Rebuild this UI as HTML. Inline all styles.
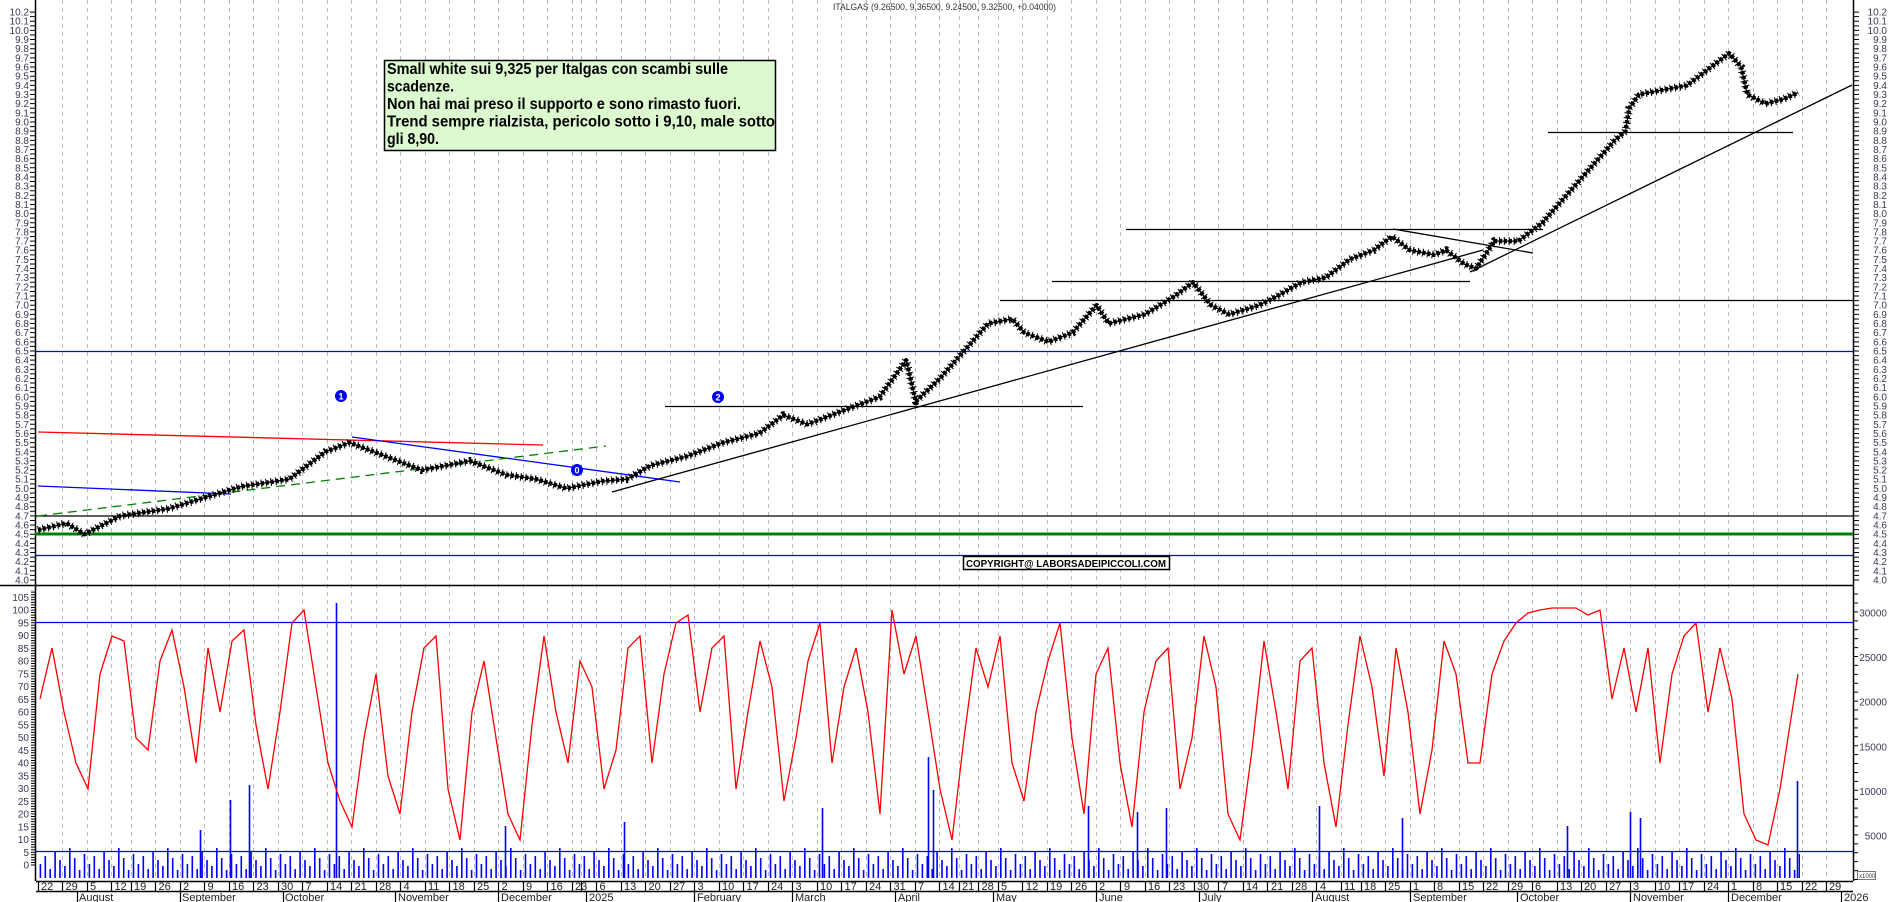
<!DOCTYPE html>
<html><head><meta charset="utf-8"><style>
html,body{margin:0;padding:0;background:#fff;}
svg{display:block;}
.ax text{font-family:"Liberation Sans",Arial,sans-serif;font-size:10px;fill:#3a3a55;}
.dt text{font-family:"Liberation Sans",Arial,sans-serif;font-size:11px;fill:#222;}
</style></head><body>
<svg width="1890" height="902" viewBox="0 0 1890 902" xmlns="http://www.w3.org/2000/svg">
<defs>
<pattern id="vol" x="38" y="0" width="49" height="902" patternUnits="userSpaceOnUse">
<rect x="1.6" y="864" width="1.6" height="14" fill="#00f"/>
<rect x="6.5" y="856" width="1.6" height="22" fill="#00f"/>
<rect x="11.4" y="869" width="1.6" height="9" fill="#00f"/>
<rect x="16.3" y="852" width="1.6" height="26" fill="#00f"/>
<rect x="21.2" y="860" width="1.6" height="18" fill="#00f"/>
<rect x="26.1" y="866" width="1.6" height="12" fill="#00f"/>
<rect x="31" y="848" width="1.6" height="30" fill="#00f"/>
<rect x="35.9" y="858" width="1.6" height="20" fill="#00f"/>
<rect x="40.8" y="870" width="1.6" height="8" fill="#00f"/>
<rect x="45.7" y="854" width="1.6" height="24" fill="#00f"/>
</pattern>
<polyline id="pr" points="38,530 66.3,523.2 84.4,534.2 120.5,515.9 168.7,508.6 198.8,499.4 241,486.6 289.2,479.2 325.4,451.8 349.5,442.6 385.6,456.3 421.8,470.1 470,460.9 506.1,474.7 536.2,479.2 566.4,488.4 602.5,481.1 626.6,479.2 650.7,465.5 686.9,456.3 723,442.6 759.2,433.4 783.3,415.1 807.4,424.3 843.5,410.5 879.7,396.8 906.2,360.2 915.8,401.4 939.9,378.5 964,351 988.1,323.5 1012.2,318.9 1024.3,332.7 1048.4,341.8 1072.5,332.7 1096.6,305.2 1108.6,323.5 1144.8,314.4 1174.9,296 1193,282.3 1211,305.2 1229.1,314.4 1259.2,305.2 1277.3,296 1301.4,282.3 1325.5,277.7 1349.6,259.4 1373.7,250.2 1391.8,236.5 1409.9,250.2 1434,254.8 1446,250.2 1464.1,264 1476.1,268.6 1494.2,241.1 1518.3,241.1 1542.4,222.8 1566.5,195.3 1590.6,167.8 1614.7,140.3 1625.5,131.2 1629.2,108.3 1638.8,94.5 1662.9,89.9 1687,85.4 1711.1,67 1729.2,53.3 1741.2,67 1747.3,94.5 1765.3,103.7 1783.4,99.1 1798,92.6"/>
</defs>
<rect width="1890" height="902" fill="#fff"/>
<path fill="none" stroke="#b8b8b8" stroke-dasharray="4,4" d="M62.5 0V878M87.5 0V878M111.5 0V878M131.5 0V878M155.5 0V878M180.5 0V878M204.5 0V878M229.5 0V878M253.5 0V878M278.5 0V878M302.5 0V878M327.5 0V878M351.5 0V878M376.5 0V878M400.5 0V878M425.5 0V878M449.5 0V878M474.5 0V878M498.5 0V878M523.5 0V878M547.5 0V878M572.5 0V878M581.5 0V878M596.5 0V878M621.5 0V878M645.5 0V878M670.5 0V878M694.5 0V878M719.5 0V878M743.5 0V878M768.5 0V878M792.5 0V878M817.5 0V878M841.5 0V878M866.5 0V878M890.5 0V878M915.5 0V878M939.5 0V878M959.5 0V878M978.5 0V878M998.5 0V878M1022.5 0V878M1047.5 0V878M1071.5 0V878M1096.5 0V878M1120.5 0V878M1145.5 0V878M1169.5 0V878M1194.5 0V878M1218.5 0V878M1243.5 0V878M1267.5 0V878M1292.5 0V878M1316.5 0V878M1341.5 0V878M1361.5 0V878M1385.5 0V878M1410.5 0V878M1434.5 0V878M1459.5 0V878M1483.5 0V878M1508.5 0V878M1532.5 0V878M1557.5 0V878M1581.5 0V878M1606.5 0V878M1630.5 0V878M1655.5 0V878M1679.5 0V878M1704.5 0V878M1728.5 0V878M1753.5 0V878M1777.5 0V878M1802.5 0V878M1826.5 0V878"/>
<path fill="none" stroke="#000" stroke-width="1.2" d="M38.5 881V891M62.5 881V891M87.5 881V891M111.5 881V891M131.5 881V891M155.5 881V891M180.5 881V891M204.5 881V891M229.5 881V891M253.5 881V891M278.5 881V891M302.5 881V891M327.5 881V891M351.5 881V891M376.5 881V891M400.5 881V891M425.5 881V891M449.5 881V891M474.5 881V891M498.5 881V891M523.5 881V891M547.5 881V891M572.5 881V891M581.5 881V891M596.5 881V891M621.5 881V891M645.5 881V891M670.5 881V891M694.5 881V891M719.5 881V891M743.5 881V891M768.5 881V891M792.5 881V891M817.5 881V891M841.5 881V891M866.5 881V891M890.5 881V891M915.5 881V891M939.5 881V891M959.5 881V891M978.5 881V891M998.5 881V891M1022.5 881V891M1047.5 881V891M1071.5 881V891M1096.5 881V891M1120.5 881V891M1145.5 881V891M1169.5 881V891M1194.5 881V891M1218.5 881V891M1243.5 881V891M1267.5 881V891M1292.5 881V891M1316.5 881V891M1341.5 881V891M1361.5 881V891M1385.5 881V891M1410.5 881V891M1434.5 881V891M1459.5 881V891M1483.5 881V891M1508.5 881V891M1532.5 881V891M1557.5 881V891M1581.5 881V891M1606.5 881V891M1630.5 881V891M1655.5 881V891M1679.5 881V891M1704.5 881V891M1728.5 881V891M1753.5 881V891M1777.5 881V891M1802.5 881V891M1826.5 881V891
M77.5 891V902M180.5 891V902M283.5 891V902M395.5 891V902M498.5 891V902M586.5 891V902M694.5 891V902M792.5 891V902M895.5 891V902M993.5 891V902M1096.5 891V902M1199.5 891V902M1312.5 891V902M1410.5 891V902M1517.5 891V902M1630.5 891V902M1728.5 891V902M1841.5 891V902"/>
<path stroke="#000" stroke-width="1.5" d="M36 881.5H1853M36 891.5H1853M35.5 0V881M1853.5 0V881"/>
<path fill="none" stroke="#000" stroke-width="6" stroke-dasharray="1,3.58" d="M33 580.5V8"/>
<path fill="none" stroke="#000" stroke-width="6" stroke-dasharray="1,3.58" d="M1856 580.5V8"/>
<path fill="none" stroke="#000" stroke-width="5" stroke-dasharray="1,1.55" d="M33.5 865.5V590"/>
<path fill="none" stroke="#000" stroke-width="5" stroke-dasharray="1,7.92" d="M1855.5 880V590"/>
<path fill="none" stroke="#000" stroke-width="1.5" d="M0 585.5H1853"/>
<path fill="none" stroke="#000" stroke-width="1.3" d="M35 516H1853M1000 300.5H1853M1052 281.5H1470M1126 229.5H1543M1548 132.5H1793M665 406.5H1083"/>
<path fill="none" stroke="#008000" stroke-width="3" d="M35 534H1853"/>
<path fill="none" stroke="#0000ff" stroke-width="1.3" d="M35 555.5H1853M35 351.5H1853M35 622.5H1853M35 851.5H1853"/>
<line x1="38" y1="432" x2="543" y2="445" stroke="#ff0000" stroke-width="1.3"/>
<line x1="38" y1="486" x2="231" y2="494" stroke="#0000ff" stroke-width="1.3"/>
<line x1="352" y1="437" x2="680" y2="482" stroke="#0000ff" stroke-width="1.3"/>
<line x1="38" y1="516" x2="606" y2="446" stroke="#008000" stroke-width="1.3" stroke-dasharray="9,6"/>
<line x1="612" y1="492" x2="1483" y2="250" stroke="#000" stroke-width="1.3"/>
<line x1="1470" y1="272" x2="1852" y2="85" stroke="#000" stroke-width="1.3"/>
<line x1="1393" y1="229" x2="1533" y2="253" stroke="#000" stroke-width="1.3"/>
<g fill="none" stroke="#000" stroke-linejoin="round">
<use href="#pr" stroke-width="1.3"/>
<use href="#pr" stroke-width="4.5" stroke-dasharray="3.2,1.7"/>
<use href="#pr" stroke-width="8" stroke-dasharray="1,3.9"/>
</g>
<rect x="38" y="840" width="1762" height="38" fill="url(#vol)"/>
<path fill="none" stroke="#00f" stroke-width="1.6" d="M336.5 878V603M928.5 878V757M933.5 878V790M1797.5 878V781M249.5 878V785M230.5 878V800M200.5 878V830M505.5 878V826M624.5 878V822M822.5 878V808M1088.5 878V806M1137.5 878V812M1166.5 878V808M1319.5 878V806M1402.5 878V818M1567.5 878V826M1630.5 878V812M1640.5 878V818"/>
<polyline fill="none" stroke="#ff0000" stroke-width="1.3" points="40,699 52,648 64,712 76,763 88,789 100,674 112,636 124,641 136,738 148,750 160,661 172,630 184,687 196,763 208,648 220,712 232,641 244,630 256,725 268,789 280,712 292,623 304,610 316,687 328,763 340,801 352,827 364,738 376,674 388,776 400,814 412,712 424,648 436,636 448,789 460,840 472,712 484,661 496,738 508,814 520,840 532,725 544,636 556,712 568,763 580,661 592,687 604,789 616,750 628,648 640,636 652,763 664,674 676,623 688,615 700,712 712,648 724,636 736,789 748,712 760,641 772,687 784,801 796,738 808,661 820,623 832,763 844,687 856,648 868,712 880,814 892,610 904,674 916,636 928,712 940,789 952,840 964,738 976,648 988,687 1000,636 1012,763 1024,801 1036,712 1048,661 1060,623 1072,738 1084,814 1096,674 1108,648 1120,763 1132,827 1144,712 1156,661 1168,648 1180,789 1192,738 1204,636 1216,687 1228,814 1240,840 1252,750 1264,641 1276,712 1288,789 1300,661 1312,648 1324,763 1336,827 1348,725 1360,636 1372,687 1384,776 1396,648 1408,712 1420,814 1432,750 1444,641 1456,674 1468,763 1480,763 1492,674 1504,641 1516,623 1528,613 1540,610 1552,608 1564,608 1576,608 1588,615 1600,610 1612,699 1624,648 1636,712 1648,648 1660,763 1672,674 1684,636 1696,623 1708,712 1720,648 1732,699 1744,814 1756,840 1768,845 1780,789 1792,712 1798,674"/>
<text x="833" y="10" font-family="Liberation Sans, Arial, sans-serif" font-size="9" fill="#333" textLength="223" lengthAdjust="spacingAndGlyphs">ITALGAS (9.26500, 9.36500, 9.24500, 9.32500, +0.04000)</text>
<rect x="384.5" y="60.5" width="391" height="90" fill="#ddf9d0" stroke="#000" stroke-width="1.5"/>
<g font-family="Liberation Sans, Arial, sans-serif" font-size="16" font-weight="bold" fill="#000">
<text x="387" y="74" textLength="341" lengthAdjust="spacingAndGlyphs">Small white sui 9,325 per Italgas con scambi sulle</text>
<text x="387" y="91.5" textLength="67" lengthAdjust="spacingAndGlyphs">scadenze.</text>
<text x="387" y="109" textLength="354" lengthAdjust="spacingAndGlyphs">Non hai mai preso il supporto e sono rimasto fuori.</text>
<text x="387" y="126.5" textLength="388" lengthAdjust="spacingAndGlyphs">Trend sempre rialzista, pericolo sotto i 9,10, male sotto</text>
<text x="387" y="144" textLength="52" lengthAdjust="spacingAndGlyphs">gli 8,90.</text>
</g>
<rect x="963.5" y="556.5" width="206" height="13" fill="#fff" stroke="#000" stroke-width="1.5"/>
<text x="966" y="567" font-family="Liberation Sans, Arial, sans-serif" font-size="10" font-weight="bold" textLength="200" lengthAdjust="spacingAndGlyphs">COPYRIGHT@ LABORSADEIPICCOLI.COM</text>
<g font-family="Liberation Sans, Arial, sans-serif" font-size="9" font-weight="bold" fill="#fff" text-anchor="middle">
<circle cx="341" cy="396" r="6" fill="#0000ee"/><text x="341" y="399.5">1</text>
<circle cx="718" cy="397" r="6" fill="#0000ee"/><text x="718" y="400.5">2</text>
<circle cx="577" cy="470" r="6" fill="#0000ee"/><text x="577" y="473.5">0</text>
</g>
<g class="ax" text-anchor="end" transform="translate(0,3.5)">
<g>
<text x="29" y="580">4.0</text><text x="29" y="570.8">4.1</text><text x="29" y="561.7">4.2</text><text x="29" y="552.5">4.3</text><text x="29" y="543.4">4.4</text><text x="29" y="534.2">4.5</text><text x="29" y="525">4.6</text><text x="29" y="515.9">4.7</text><text x="29" y="506.7">4.8</text><text x="29" y="497.6">4.9</text><text x="29" y="488.4">5.0</text><text x="29" y="479.2">5.1</text><text x="29" y="470.1">5.2</text><text x="29" y="460.9">5.3</text><text x="29" y="451.8">5.4</text><text x="29" y="442.6">5.5</text><text x="29" y="433.4">5.6</text><text x="29" y="424.3">5.7</text><text x="29" y="415.1">5.8</text><text x="29" y="406">5.9</text><text x="29" y="396.8">6.0</text><text x="29" y="387.6">6.1</text><text x="29" y="378.5">6.2</text><text x="29" y="369.3">6.3</text><text x="29" y="360.2">6.4</text><text x="29" y="351">6.5</text><text x="29" y="341.8">6.6</text><text x="29" y="332.7">6.7</text><text x="29" y="323.5">6.8</text><text x="29" y="314.4">6.9</text><text x="29" y="305.2">7.0</text><text x="29" y="296">7.1</text><text x="29" y="286.9">7.2</text><text x="29" y="277.7">7.3</text><text x="29" y="268.6">7.4</text><text x="29" y="259.4">7.5</text><text x="29" y="250.2">7.6</text><text x="29" y="241.1">7.7</text><text x="29" y="231.9">7.8</text><text x="29" y="222.8">7.9</text><text x="29" y="213.6">8.0</text><text x="29" y="204.4">8.1</text><text x="29" y="195.3">8.2</text><text x="29" y="186.1">8.3</text><text x="29" y="177">8.4</text><text x="29" y="167.8">8.5</text><text x="29" y="158.6">8.6</text><text x="29" y="149.5">8.7</text><text x="29" y="140.3">8.8</text><text x="29" y="131.2">8.9</text><text x="29" y="122">9.0</text><text x="29" y="112.8">9.1</text><text x="29" y="103.7">9.2</text><text x="29" y="94.5">9.3</text><text x="29" y="85.4">9.4</text><text x="29" y="76.2">9.5</text><text x="29" y="67">9.6</text><text x="29" y="57.9">9.7</text><text x="29" y="48.7">9.8</text><text x="29" y="39.6">9.9</text><text x="29" y="30.4">10.0</text><text x="29" y="21.2">10.1</text><text x="29" y="12.1">10.2</text>
</g>
<g>
<text x="1887" y="580">4.0</text><text x="1887" y="570.8">4.1</text><text x="1887" y="561.7">4.2</text><text x="1887" y="552.5">4.3</text><text x="1887" y="543.4">4.4</text><text x="1887" y="534.2">4.5</text><text x="1887" y="525">4.6</text><text x="1887" y="515.9">4.7</text><text x="1887" y="506.7">4.8</text><text x="1887" y="497.6">4.9</text><text x="1887" y="488.4">5.0</text><text x="1887" y="479.2">5.1</text><text x="1887" y="470.1">5.2</text><text x="1887" y="460.9">5.3</text><text x="1887" y="451.8">5.4</text><text x="1887" y="442.6">5.5</text><text x="1887" y="433.4">5.6</text><text x="1887" y="424.3">5.7</text><text x="1887" y="415.1">5.8</text><text x="1887" y="406">5.9</text><text x="1887" y="396.8">6.0</text><text x="1887" y="387.6">6.1</text><text x="1887" y="378.5">6.2</text><text x="1887" y="369.3">6.3</text><text x="1887" y="360.2">6.4</text><text x="1887" y="351">6.5</text><text x="1887" y="341.8">6.6</text><text x="1887" y="332.7">6.7</text><text x="1887" y="323.5">6.8</text><text x="1887" y="314.4">6.9</text><text x="1887" y="305.2">7.0</text><text x="1887" y="296">7.1</text><text x="1887" y="286.9">7.2</text><text x="1887" y="277.7">7.3</text><text x="1887" y="268.6">7.4</text><text x="1887" y="259.4">7.5</text><text x="1887" y="250.2">7.6</text><text x="1887" y="241.1">7.7</text><text x="1887" y="231.9">7.8</text><text x="1887" y="222.8">7.9</text><text x="1887" y="213.6">8.0</text><text x="1887" y="204.4">8.1</text><text x="1887" y="195.3">8.2</text><text x="1887" y="186.1">8.3</text><text x="1887" y="177">8.4</text><text x="1887" y="167.8">8.5</text><text x="1887" y="158.6">8.6</text><text x="1887" y="149.5">8.7</text><text x="1887" y="140.3">8.8</text><text x="1887" y="131.2">8.9</text><text x="1887" y="122">9.0</text><text x="1887" y="112.8">9.1</text><text x="1887" y="103.7">9.2</text><text x="1887" y="94.5">9.3</text><text x="1887" y="85.4">9.4</text><text x="1887" y="76.2">9.5</text><text x="1887" y="67">9.6</text><text x="1887" y="57.9">9.7</text><text x="1887" y="48.7">9.8</text><text x="1887" y="39.6">9.9</text><text x="1887" y="30.4">10.0</text><text x="1887" y="21.2">10.1</text><text x="1887" y="12.1">10.2</text>
</g>
<text x="29" y="597.3">105</text><text x="29" y="610">100</text><text x="29" y="622.8">95</text><text x="29" y="635.5">90</text><text x="29" y="648.3">85</text><text x="29" y="661">80</text><text x="29" y="673.8">75</text><text x="29" y="686.5">70</text><text x="29" y="699.3">65</text><text x="29" y="712">60</text><text x="29" y="724.8">55</text><text x="29" y="737.5">50</text><text x="29" y="750.3">45</text><text x="29" y="763">40</text><text x="29" y="775.8">35</text><text x="29" y="788.5">30</text><text x="29" y="801.3">25</text><text x="29" y="814">20</text><text x="29" y="826.8">15</text><text x="29" y="839.5">10</text><text x="29" y="852.3">5</text><text x="29" y="865">0</text>
<text x="1887" y="613">30000</text><text x="1887" y="657.5">25000</text><text x="1887" y="702">20000</text><text x="1887" y="747">15000</text><text x="1887" y="791.5">10000</text><text x="1887" y="836">5000</text>
</g>
<rect x="1857.5" y="871.5" width="18" height="8" fill="#fff" stroke="#555" stroke-width="0.8"/>
<text x="1859" y="878" font-family="Liberation Sans, Arial, sans-serif" font-size="6" fill="#333">x1000</text>
<g class="dt">
<text x="41" y="890">22</text><text x="65.5" y="890">29</text><text x="90" y="890">5</text><text x="114.5" y="890">12</text><text x="134" y="890">19</text><text x="158.5" y="890">26</text><text x="183" y="890">2</text><text x="207.5" y="890">9</text><text x="232" y="890">16</text><text x="256.5" y="890">23</text><text x="281" y="890">30</text><text x="305.5" y="890">7</text><text x="330" y="890">14</text><text x="354.5" y="890">21</text><text x="379" y="890">28</text><text x="403.5" y="890">4</text><text x="428" y="890">11</text><text x="452.5" y="890">18</text><text x="477" y="890">25</text><text x="501.5" y="890">2</text><text x="526" y="890">9</text><text x="550.5" y="890">16</text><text x="575" y="890">23</text><text x="599.5" y="890">6</text><text x="624" y="890">13</text><text x="648.5" y="890">20</text><text x="673" y="890">27</text><text x="697.5" y="890">3</text><text x="722" y="890">10</text><text x="746.5" y="890">17</text><text x="771" y="890">24</text><text x="795.5" y="890">3</text><text x="820" y="890">10</text><text x="844.5" y="890">17</text><text x="869" y="890">24</text><text x="893.5" y="890">31</text><text x="918" y="890">7</text><text x="942.5" y="890">14</text><text x="962" y="890">21</text><text x="981.5" y="890">28</text><text x="1001" y="890">5</text><text x="1026" y="890">12</text><text x="1050" y="890">19</text><text x="1075" y="890">26</text><text x="1099" y="890">2</text><text x="1124" y="890">9</text><text x="1148" y="890">16</text><text x="1173" y="890">23</text><text x="1197" y="890">30</text><text x="1222" y="890">7</text><text x="1246" y="890">14</text><text x="1271" y="890">21</text><text x="1295" y="890">28</text><text x="1320" y="890">4</text><text x="1344" y="890">11</text><text x="1364" y="890">18</text><text x="1388" y="890">25</text><text x="1413" y="890">1</text><text x="1437" y="890">8</text><text x="1462" y="890">15</text><text x="1486" y="890">22</text><text x="1511" y="890">29</text><text x="1535" y="890">6</text><text x="1560" y="890">13</text><text x="1584" y="890">20</text><text x="1609" y="890">27</text><text x="1633" y="890">3</text><text x="1658" y="890">10</text><text x="1682" y="890">17</text><text x="1707" y="890">24</text><text x="1731" y="890">1</text><text x="1756" y="890">8</text><text x="1780" y="890">15</text><text x="1805" y="890">22</text><text x="1829" y="890">29</text>
</g>
<g class="dt">
<text x="79" y="901" font-size="10">August</text><text x="182" y="901" font-size="10">September</text><text x="285" y="901" font-size="10">October</text><text x="398" y="901" font-size="10">November</text><text x="501" y="901" font-size="10">December</text><text x="589" y="901" font-size="10">2025</text><text x="697" y="901" font-size="10">February</text><text x="795" y="901" font-size="10">March</text><text x="898" y="901" font-size="10">April</text><text x="996" y="901" font-size="10">May</text><text x="1099" y="901" font-size="10">June</text><text x="1202" y="901" font-size="10">July</text><text x="1315" y="901" font-size="10">August</text><text x="1413" y="901" font-size="10">September</text><text x="1520" y="901" font-size="10">October</text><text x="1633" y="901" font-size="10">November</text><text x="1731" y="901" font-size="10">December</text><text x="1844" y="901" font-size="10">2026</text>
</g>
</svg>
</body></html>
